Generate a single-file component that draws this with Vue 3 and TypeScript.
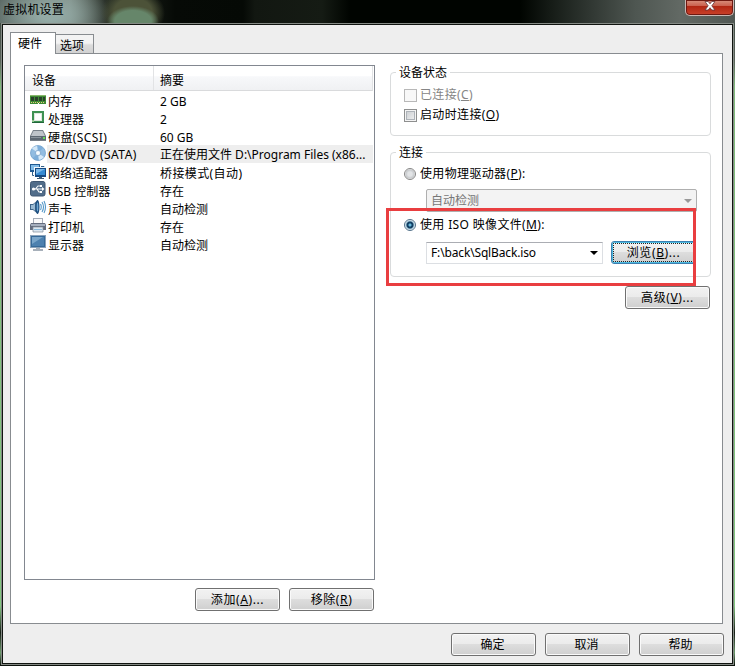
<script setup lang="ts">
interface Device { icon: string; name: string; summary: string; selected?: boolean }
const devices: Device[] = [
  { icon: 'memory', name: '内存', summary: '2 GB' },
  { icon: 'cpu', name: '处理器', summary: '2' },
  { icon: 'disk', name: '硬盘(SCSI)', summary: '60 GB' },
  { icon: 'cd', name: 'CD/DVD (SATA)', summary: '正在使用文件 D:\\Program Files (x86...', selected: true },
  { icon: 'net', name: '网络适配器', summary: '桥接模式(自动)' },
  { icon: 'usb', name: 'USB 控制器', summary: '存在' },
  { icon: 'sound', name: '声卡', summary: '自动检测' },
  { icon: 'printer', name: '打印机', summary: '存在' },
  { icon: 'display', name: '显示器', summary: '自动检测' },
]
const actions: string[] = ['确定', '取消', '帮助']
</script>

<template>
  <div class="window">
    <header class="titlebar">
      <span class="title">虚拟机设置</span>
      <button class="close" aria-label="关闭">
        <svg width="12" height="10" viewBox="0 0 12 10"><path d="M1 .5h3.2L6 2.8 7.8.5H11L7.8 4.8 11 9H7.800L6 6.700 4.200 9H1l3.200-4.200z" fill="#fff" stroke="#62343a" stroke-width=".8" /></svg>
      </button>
    </header>
    <main class="client">
      <nav class="tabs">
        <div class="tab active">硬件</div>
        <div class="tab">选项</div>
      </nav>
      <section class="page">
        <div class="left">
          <div class="list">
            <div class="head"><span class="c1">设备</span><span class="c2">摘要</span></div>
            <div v-for="d in devices" :key="d.icon" class="row" :class="[d.icon, { selected: d.selected }]">
              <svg class="icon" width="17" height="17" viewBox="0 0 17 17">
                <g v-if="d.icon === 'memory'">
                  <path d="M0 4h16v9H0z" fill="#3f8a35" /><path d="M0 4h16v1H0z" fill="#87b66b" />
                  <path d="M1 6h3v4H1zM5 6h3v4H5zM9 6h3v4H9zM13 6h2v4h-2z" fill="#29402b" />
                  <path d="M1 11.500h14" stroke="#e2cf79" stroke-width="1" stroke-dasharray="1 1" /><path d="M8 12h1v1H8z" fill="#fff" />
                </g>
                <g v-else-if="d.icon === 'cpu'">
                  <path d="M2 2h12v12H2z" fill="#3e9152" /><path d="M2 13h12v1H2z" fill="#21663a" />
                  <path d="M4 4h8v8H4z" fill="#dfe9df" /><path d="M5 5h6v6H5z" fill="#fff" /><path d="M2 11h2v2H2z" fill="#95c692" />
                </g>
                <g v-else-if="d.icon === 'disk'">
                  <path d="M3 3h10l3 6v5H0V9z" fill="#777f88" /><path d="M3.500 4h9l2.500 5H1z" fill="#bfc4ca" />
                  <path d="M0 9h16v4H0z" fill="#5e6873" /><path d="M1 10h10v1H1z" fill="#8b949d" /><path d="M13 10h2v2h-2z" fill="#64df58" />
                </g>
                <g v-else-if="d.icon === 'cd'">
                  <circle cx="8" cy="8" r="7.500" fill="#91bce1" stroke="#6599c7" stroke-width=".7" />
                  <path d="M8 8L2 3.500A7 7 0 0 1 7 1zM8 8l6 4a7 7 0 0 1-5 3z" fill="#d4e8f8" />
                  <path d="M8 8L8 1a7 7 0 0 1 5 2zM8 8v7a7 7 0 0 1-5-2z" fill="#5e98cf" opacity=".4" />
                  <circle cx="8" cy="8" r="2.700" fill="#e7f2fb" stroke="#729dc5" stroke-width=".7" /><circle cx="8" cy="8" r="1" fill="#fff" />
                </g>
                <g v-else-if="d.icon === 'net'">
                  <path d="M0 1h10v8H0z" fill="#205a92" /><path d="M1 2h8v5H1z" fill="#82bce8" />
                  <path d="M2.500 9v3.500h3M11 3.500h3V5" fill="none" stroke="#315f88" stroke-width="1" />
                  <path d="M4 4h12v9H4z" fill="#f1f6fa" /><path d="M5 5h11v9H5z" fill="#164a82" /><path d="M6 6h9v6H6z" fill="#378bd2" />
                  <path d="M6 6h9l-9 5z" fill="#7cb9e9" /><path d="M9 14h3v1h2v1H7v-1h2z" fill="#415d77" />
                </g>
                <g v-else-if="d.icon === 'usb'">
                  <rect x=".5" y=".5" width="14.500" height="14.500" rx="2" fill="#516d8a" stroke="#3f5772" />
                  <path d="M3 8h10M5.500 8l2.500-3h3M7 8l2 3h2" fill="none" stroke="#fff" stroke-width="1.100" />
                  <circle cx="3.500" cy="8" r="1.600" fill="#fff" /><path d="M12 6l2.500 2-2.500 2zM10 4h2v2h-2zM10 10h2v2h-2z" fill="#fff" />
                </g>
                <g v-else-if="d.icon === 'sound'">
                  <path d="M0 5h3l5-4v14l-5-4H0z" fill="#3f6589" /><path d="M1 6h2l2-2v8l-2-2H1z" fill="#9bbad2" /><ellipse cx="7.500" cy="8" rx="2" ry="7" fill="#1d4f80" /><ellipse cx="7.500" cy="8" rx=".8" ry="4.500" fill="#6ea6d0" />
                  <path d="M10.500 5q1.500 3 0 6M12 3q3 5 0 10M14 2q3 6 0 12" fill="none" stroke="#5598c8" stroke-width="1.100" />
                </g>
                <g v-else-if="d.icon === 'printer'">
                  <path d="M3 1h10v7H3z" fill="#a6adb8" /><path d="M4 2h8v5H4z" fill="#fafafa" />
                  <path d="M1 6h14l1 2v5H0V8z" fill="#646d7e" /><path d="M1 7h14v2H1z" fill="#a5afbe" />
                  <path d="M3 10h10v5H3z" fill="#dce7f0" stroke="#838e99" stroke-width=".7" /><path d="M4 12.500h8" stroke="#87b8da" />
                </g>
                <g v-else>
                  <path d="M0 0h16v13H0z" fill="#8ba3ba" /><path d="M1 1h14v11H1z" fill="#376a98" />
                  <path d="M2 2h12v9H2z" fill="#4d81af" /><path d="M2 2h11L2 9z" fill="#7aa6ca" /><path d="M6 13h4v1h3v2H3v-2h3z" fill="#a7b0ba" />
                </g>
              </svg>
              <span class="c1">{{ d.name }}</span><span class="c2">{{ d.summary }}</span>
            </div>
          </div>
          <div class="list-actions">
            <button class="btn">添加(<u>A</u>)...</button>
            <button class="btn">移除(<u>R</u>)</button>
          </div>
        </div>
        <div class="right">
          <div class="group status">
            <div class="legend"><span>设备状态</span></div>
            <label class="option disabled"><i class="check"></i><span>已连接(<u>C</u>)</span></label>
            <label class="option"><i class="check"></i><span>启动时连接(<u>O</u>)</span></label>
          </div>
          <div class="group connection">
            <div class="legend"><span>连接</span></div>
            <label class="option"><i class="radio"></i><span>使用物理驱动器(<u>P</u>):</span></label>
            <div class="combo disabled"><span>自动检测</span><i class="arrow"></i></div>
            <label class="option iso"><i class="radio on"></i><span>使用 ISO 映像文件(<u>M</u>):</span></label>
            <div class="file">
              <div class="combo"><span>F:\back\SqlBack.iso</span><i class="arrow"></i></div>
              <button class="btn focus">浏览(<u>B</u>)...</button>
            </div>
            <div class="highlight"></div>
          </div>
          <button class="btn advanced">高级(<u>V</u>)...</button>
        </div>
      </section>
      <footer class="footer"><button v-for="a in actions" :key="a" class="btn plain">{{ a }}</button></footer>
    </main>
  </div>
</template>

<style>
body { margin: 0; overflow: hidden; }
</style>
<style scoped>
* { box-sizing: border-box; }
.window {
  width: 735px; height: 666px; padding: 0 2px 2px; display: flex; flex-direction: column;
  font: 12px/18px "Noto Sans", "Noto Sans CJK SC", sans-serif; color: #000; white-space: nowrap;
  background: linear-gradient(#34433a 0, #596259 9%, #80bd7c 13%, #80c77e 91%, #182018 95%, #6a9a6a 98%, #080c08);
}
.titlebar {
  height: 23px; margin: 0 -2px; display: flex; justify-content: space-between; flex: none;
  background:
    radial-gradient(ellipse 26px 15px at 133px 21px, #66866a 70%, transparent 100%),
    radial-gradient(ellipse 32px 25px at 133px 13px, #4c5238 60%, transparent 100%),
    radial-gradient(ellipse 60px 34px at 50px 15px, #93aaa5 15%, transparent 100%),
    linear-gradient(90deg, #596661 0, #7b8881 70px, #252c24 108px, #060a06 175px, #050905 243px, #121711 255px, #151b14 322px, #000400 350px, #000400 520px, #151b16 550px, #4e5651 635px, #626964 680px, #505753 735px);
}
.title { padding: 1px 0 0 3px; line-height: 17px; letter-spacing: .2px; }
.close {
  width: 49px; height: 16px; margin: 0 1px 0 0; padding: 0 0 4px 1px; display: flex; align-items: center; justify-content: center; flex: none;
  border: 1px solid #c9b7b4; border-top: 0; border-radius: 0 0 5px 5px; box-shadow: inset 0 0 0 1px #6f1911;
  background: linear-gradient(#d9917f, #cb6250 38%, #b12613 42%, #cb422b);
}
.client {
  width: 731px; height: 640px; border: 1px solid #101410; outline: 1px solid #858a85;
  background: #eeeeee; padding: 7px 8px 0 7px; margin-top: 1px; display: flex; flex-direction: column; flex: none;
}
.tabs { display: flex; height: 22px; align-items: flex-end; flex: none; }
.tab { height: 20px; width: 38px; border: 1px solid #888c90; border-left: 0; padding: 2px 0 0 4px; line-height: 18px; background: linear-gradient(#f3f3f3 45%, #dcdcdc 55%, #d2d2d2); }
.tab.active { position: relative; z-index: 1; height: 22px; width: 46px; border: 1px solid #888c90; border-bottom: 0; padding: 2px 0 0 7px; background: #fff; }
.page {
  width: 713px; height: 571px; margin-top: -1px; border: 1px solid #888c90; background: #fff; display: flex; flex: none;
  padding: 11px 11px 0 13px; gap: 15px;
}
.left { width: 351px; }
.list { height: 515px; border: 1px solid #828790; }
.head { height: 25px; margin: 0 1px 0 0; padding-left: 7px; border-bottom: 1px solid #d9dadc; border-right: 1px solid #e1e2e4; background: linear-gradient(#fff 40%, #f7f8fa 45%, #f0f1f3); display: flex; line-height: 29px; }
.head .c1 { width: 122px; border-right: 1px solid #e2e3e5; margin-right: 6px; }
.row { height: 18px; display: flex; padding-left: 5px; line-height: 21px; margin-right: 1px; }
.icon { flex: none; }
.row .c1 { width: 106px; padding-left: 1px; }
.row .c2 { flex: 1; padding-left: 7px; }
.disk .c1 { letter-spacing: .4px; }
.cd .c1 { letter-spacing: .48px; }
.net .c2 { letter-spacing: .4px; }
.selected span { background: #eeeeee; line-height: 20px; }
.list-actions { display: flex; justify-content: flex-end; gap: 9px; margin: 8px 1px 0 0; }
.btn {
  width: 85px; height: 23px; margin: 0; padding: 0; font: inherit; line-height: 22px; letter-spacing: .6px; color: #000; text-align: center; display: block; flex: none;
  border: 1px solid #707070; border-radius: 3px; box-shadow: inset 0 0 0 1px #fafafa;
  background: linear-gradient(#f2f2f2, #ebebeb 48%, #dddddd 50%, #cfcfcf);
}
.btn.plain { letter-spacing: 0; padding-right: 2px; }
u { text-decoration-thickness: 1px; text-underline-offset: 1px; }
.right { width: 321px; padding-top: 7px; }
.group { position: relative; border: 1px solid #d9dbdc; border-radius: 4px; }
.legend { height: 18px; margin: -9px 0 0 5px; }
.legend span { display: inline-block; background: #fff; padding: 0 3px; }
.status { height: 64px; }
.connection { height: 125px; margin-top: 16px; }
.option { display: flex; align-items: center; height: 20px; margin-left: 13px; gap: 3px; letter-spacing: .35px; }
.status .option:nth-child(2) { margin-top: 3px; }
.option.disabled { color: #858585; }
.check { width: 13px; height: 13px; border: 1px solid #8e8f8f; background: linear-gradient(135deg, #c5c9cd, #f5f5f5); box-shadow: inset 0 0 0 1px #f4f4f4, inset 0 0 0 2px #aeb3b9; }
.disabled .check { border-color: #b8b8b8; background: #f8f8f8; box-shadow: none; }
.radio { width: 12px; height: 12px; margin-right: 1px; border: 1px solid #858585; border-radius: 50%; background: radial-gradient(#e2e4e6 30%, #c5c8cb 60%, #f5f5f5 70%); }
.radio.on { border-color: #52718a; background: radial-gradient(circle at 50% 50%, #69bbdc 0 1px, #123f64 2px 3px, #9fc3d5 4px, #f5fafc 5px); }
.connection .legend + .option { margin-top: 2px; }
.combo { width: 177px; height: 22px; border: 1px solid #dcdfe3; border-top-color: #abadb3; background: #fff; display: flex; align-items: center; justify-content: space-between; padding: 0 4px; letter-spacing: -.15px; }
.combo.disabled { width: 271px; height: 23px; margin: 5px 0 0 35px; border: 1px solid #afafaf; border-radius: 2px; background: #f3f3f3; color: #777; letter-spacing: 0; }
.combo.disabled span { padding: 1px 0 0 0; }
.arrow { border: 4px solid transparent; border-top: 4px solid #000; border-bottom: 0; }
.disabled .arrow { border-top-color: #999; }
.iso { margin-top: 3px; }
.file { margin: 7px 0 0 35px; display: flex; gap: 8px; }
.btn.focus { margin-top: -1px; border-color: #3c7fb1; box-shadow: inset 0 0 0 1px #4ebbe0; outline: 1px dotted #222; outline-offset: -3px; }
.highlight { position: absolute; left: -5px; top: 55px; width: 310px; height: 78px; border: 3px solid #e93e40; }
.advanced { margin: 9px 0 0 235px; }
.footer { display: flex; justify-content: flex-end; gap: 9px; padding-top: 9px; }
</style>
